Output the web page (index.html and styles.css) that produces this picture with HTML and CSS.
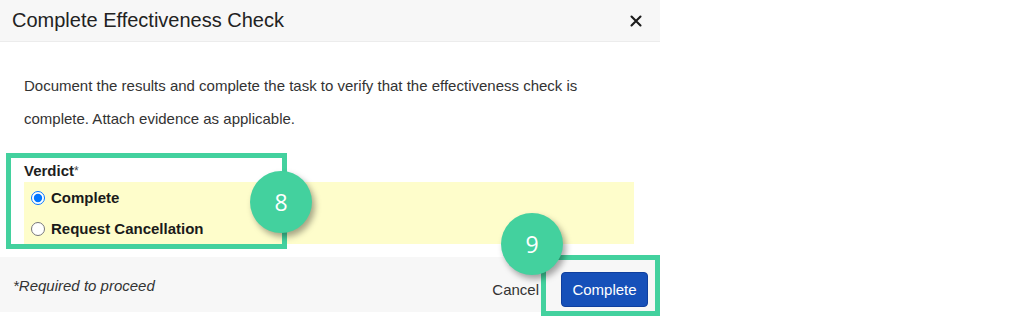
FILE: index.html
```html
<!DOCTYPE html>
<html lang="en">
<head>
<meta charset="utf-8">
<title>Complete Effectiveness Check</title>
<link rel="stylesheet" href="styles.css">
</head>
<body>
<div class="stage">
  <div class="modal">
    <div class="modal-header">
      <h1 class="modal-title">Complete Effectiveness Check</h1>
      <button class="close-btn" aria-label="Close">
        <svg width="12" height="12" viewBox="0 0 12 12"><path d="M1.5 1.5 L10.5 10.5 M10.5 1.5 L1.5 10.5" stroke="#1b1b1b" stroke-width="2.1" stroke-linecap="round" fill="none"/></svg>
      </button>
    </div>
    <div class="modal-body">
      <p class="intro">Document the results and complete the task to verify that the effectiveness check is complete. Attach evidence as applicable.</p>
      <div class="field-label">Verdict<span class="req">*</span></div>
      <div class="radio-group">
        <label class="radio-row"><input type="radio" name="verdict" checked><span>Complete</span></label>
        <label class="radio-row"><input type="radio" name="verdict"><span>Request Cancellation</span></label>
      </div>
    </div>
    <div class="modal-footer">
      <span class="required-note">*Required to proceed</span>
      <div class="actions">
        <button class="btn-cancel">Cancel</button>
        <button class="btn-primary">Complete</button>
      </div>
    </div>
  </div>
  <div class="callout-box box-8"></div>
  <div class="callout-box box-9"></div>
  <div class="badge badge-8">8</div>
  <div class="badge badge-9">9</div>
</div>
</body>
</html>
```
FILE: styles.css
```css
html, body {
  margin: 0;
  padding: 0;
  background: #ffffff;
}
body {
  font-family: "Liberation Sans", Arial, sans-serif;
  color: #333333;
}
.stage {
  position: relative;
  width: 1025px;
  height: 316px;
  overflow: hidden;
}
.modal {
  width: 660px;
  display: flex;
  flex-direction: column;
}
.modal-header {
  height: 42px;
  box-sizing: border-box;
  background: #f7f7f7;
  border-bottom: 1px solid #ececec;
  display: flex;
  align-items: center;
  justify-content: space-between;
  padding: 0 18px 0 12px;
}
.modal-title {
  margin: 0;
  font-size: 20px;
  font-weight: normal;
  color: #222222;
}
.close-btn {
  border: 0;
  background: none;
  padding: 0;
  width: 12px;
  height: 12px;
  display: flex;
}
.modal-body {
  padding: 27px 26px 13px 24px;
}
.intro {
  margin: 0;
  font-size: 15px;
  line-height: 33px;
  color: #333333;
}
.field-label {
  margin-top: 27px;
  font-size: 15px;
  font-weight: bold;
  line-height: 18px;
  color: #1e1e1e;
}
.req {
  font-weight: normal;
  font-size: 12px;
  vertical-align: top;
  color: #444;
}
.radio-group {
  margin-top: 2px;
  background: #fefdcb;
  display: flex;
  flex-direction: column;
}
.radio-row {
  height: 31px;
  display: flex;
  align-items: center;
  gap: 4px;
  padding-left: 2px;
  font-size: 15px;
  font-weight: bold;
  color: #1a1a1a;
}
.radio-row input {
  margin: 0 2px 0 5px;
  width: 14px;
  height: 14px;
}
.modal-footer {
  height: 55px;
  box-sizing: border-box;
  background: #f7f7f7;
  display: flex;
  align-items: center;
  justify-content: space-between;
  padding: 0 12px 0 13px;
}
.required-note {
  font-style: italic;
  font-size: 15px;
  color: #333333;
  margin-top: 2px;
}
.actions {
  display: flex;
  align-items: center;
  gap: 22px;
  margin-top: 9px;
}
.btn-cancel {
  border: 0;
  background: none;
  padding: 0;
  font-family: inherit;
  font-size: 15px;
  color: #333333;
}
.btn-primary {
  width: 87px;
  height: 35px;
  border: 1px solid #0f3f9e;
  border-radius: 4px;
  background: #1650b9;
  color: #ffffff;
  font-family: inherit;
  font-size: 15px;
  padding: 0;
}
.callout-box {
  position: absolute;
  box-sizing: border-box;
  border: 5px solid #43d19e;
}
.box-8 {
  left: 6px;
  top: 153px;
  width: 281px;
  height: 96px;
}
.box-9 {
  left: 541px;
  top: 255px;
  width: 119px;
  height: 61px;
}
.badge {
  position: absolute;
  width: 62px;
  height: 62px;
  border-radius: 50%;
  background: #43d19e;
  color: #ffffff;
  font-family: "Open Sans", sans-serif;
  font-size: 23px;
  display: flex;
  align-items: center;
  justify-content: center;
  box-shadow: 3px 4px 6px rgba(0, 0, 0, 0.35);
}
.badge-8 {
  left: 250px;
  top: 171px;
}
.badge-9 {
  left: 501px;
  top: 213px;
}
```
